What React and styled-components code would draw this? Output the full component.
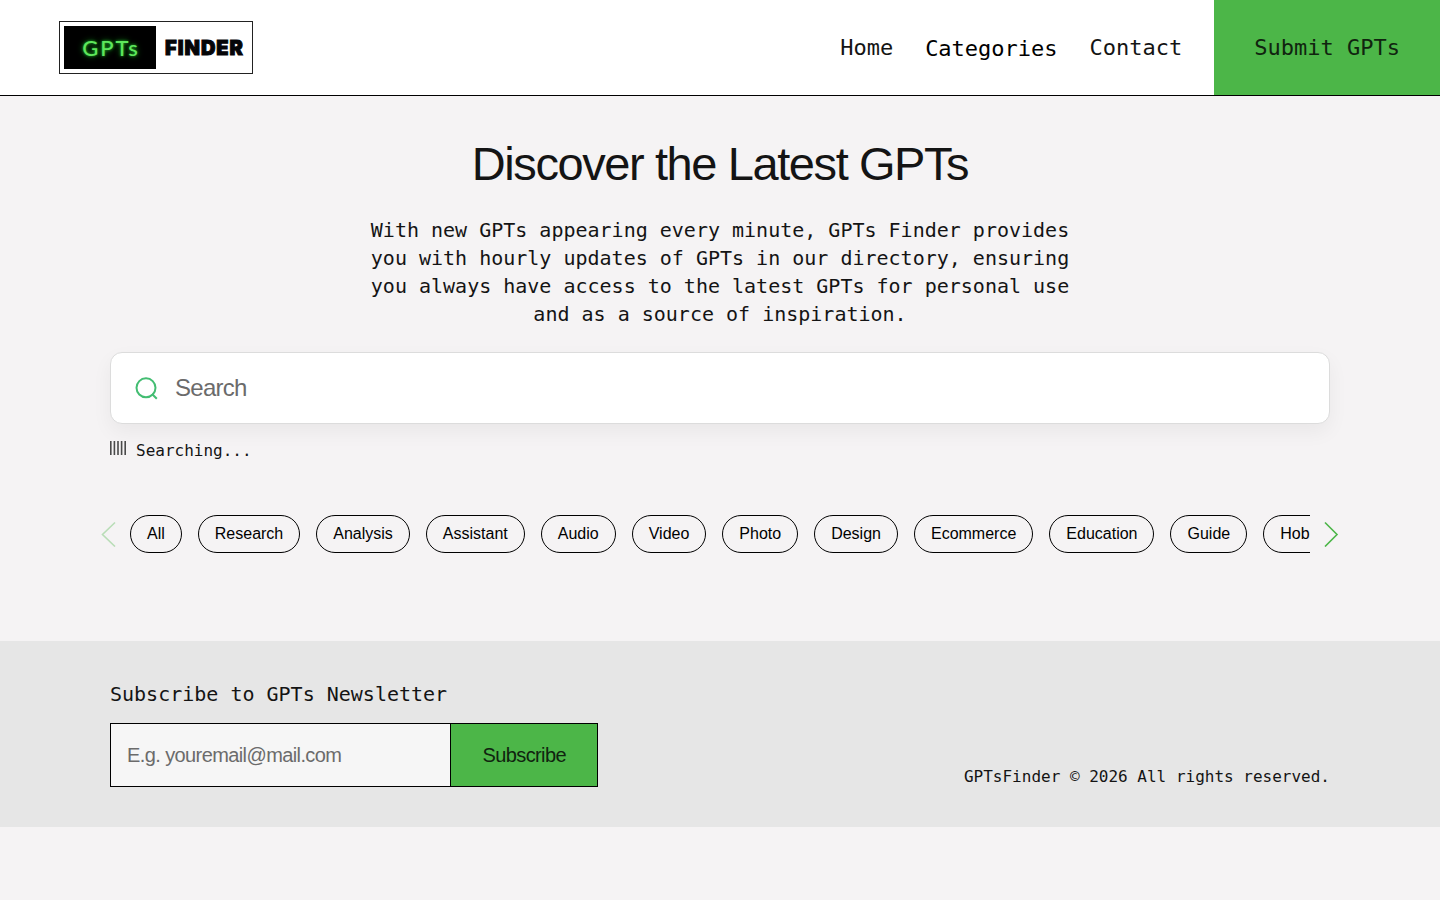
import React from "react";
import styled, { createGlobalStyle } from "styled-components";

const MONO = '"DejaVu Sans Mono", monospace';
const SANS = '"Liberation Sans", Arial, sans-serif';
const GREEN = "#4cb648";
const INK = "#141414";

const GlobalStyle = createGlobalStyle`
  *, *::before, *::after { box-sizing: border-box; }
  body {
    margin: 0;
    background: #f5f3f4;
    color: ${INK};
    font: 16px/20px ${MONO};
  }
  button, input { font: inherit; color: inherit; }
  button { cursor: pointer; }
`;

const Container = styled.div`
  max-width: 1260px;
  margin: 0 auto;
  padding: 0 20px;
`;

const Header = styled.header`
  display: flex;
  align-items: stretch;
  justify-content: space-between;
  height: 96px;
  padding-left: 59px;
  background: #fff;
  border-bottom: 1px solid #000;
`;

const Logo = styled.a`
  display: flex;
  align-items: center;
  align-self: center;
  height: 53px;
  padding: 4px 8px 4px 4px;
  border: 1px solid #222;
  background: #fff;
  text-decoration: none;
`;

const LogoNeon = styled.span`
  display: flex;
  align-items: center;
  justify-content: center;
  width: 92px;
  height: 43px;
  padding-left: 2px;
  background: #000;
  color: #5ee65c;
  font: 500 22px/24px Lato, ${SANS};
  letter-spacing: 2px;
  text-shadow: 0 0 3px #1fae28, 0 0 6px #137a1a;
`;

const LogoWord = styled.span`
  margin-left: 9px;
  color: #050508;
  font: 900 20px/24px Inter, ${SANS};
  letter-spacing: 1px;
  -webkit-text-stroke: 1px #050508;
`;

const Nav = styled.nav`
  display: flex;
  align-items: center;
  gap: 32px;
  font-size: 22px;
  line-height: 28px;
`;

const NavLink = styled.a`
  color: ${INK};
  text-decoration: none;
`;

const NavButton = styled.button`
  padding: 2px 0 0;
  border: 0;
  background: none;
  color: #000;
`;

const SubmitLink = styled.a`
  display: flex;
  align-items: center;
  align-self: stretch;
  padding: 0 40px;
  background: ${GREEN};
  color: #10240f;
  text-decoration: none;
`;

const Hero = styled.section`
  padding-top: 39px;
  text-align: center;
`;

const Title = styled.h1`
  margin: 0 0 24px;
  font: 400 47px/57px ${SANS};
  letter-spacing: -0.03em;
`;

const Intro = styled.p`
  max-width: 720px;
  margin: 0 auto 24px;
  font-size: 20px;
  line-height: 28px;
`;

const SearchBox = styled.label`
  display: flex;
  align-items: center;
  gap: 16px;
  height: 72px;
  padding: 0 24px;
  background: #fff;
  border: 1px solid #dcdcdc;
  border-radius: 12px;
  box-shadow: 0 8px 20px rgba(0, 0, 0, 0.05);
`;

const SearchInput = styled.input`
  flex: 1;
  min-width: 0;
  padding: 0;
  border: 0;
  outline: 0;
  background: none;
  font: 24px/32px ${SANS};
  letter-spacing: -0.03em;
  &::placeholder { color: #6b6b6b; opacity: 1; }
`;

const Status = styled.p`
  display: flex;
  gap: 10px;
  margin: 17px 0 54px;
`;

const Carousel = styled.div`
  display: flex;
  align-items: center;
  gap: 14px;
  margin: 0 -10px;
`;

const ArrowButton = styled.button`
  display: flex;
  flex: none;
  width: 16px;
  padding: 0;
  border: 0;
  background: none;
  color: ${GREEN};
  &:disabled { opacity: 0.35; cursor: default; }
`;

const ChipTrack = styled.div`
  display: flex;
  flex: 1;
  gap: 16px;
  min-width: 0;
  overflow: hidden;
`;

const Chip = styled.button`
  flex: none;
  height: 38px;
  padding: 0 16px;
  border: 1px solid #000;
  border-radius: 19px;
  background: transparent;
  color: #000;
  font: 16px/20px ${SANS};
`;

const Footer = styled.footer`
  margin-top: 88px;
  padding: 39px 0 40px;
  background: #e6e6e6;
`;

const FooterRow = styled(Container)`
  display: flex;
  flex-wrap: wrap;
  align-items: flex-end;
  justify-content: space-between;
  gap: 24px;
`;

const Newsletter = styled.form`
  flex: 0 1 488px;
`;

const NewsletterLabel = styled.label`
  display: block;
  margin-bottom: 15px;
  font-size: 20px;
  line-height: 28px;
`;

const Field = styled.div`
  display: flex;
  height: 64px;
  border: 1px solid #000;
  font: 20px/24px ${SANS};
  letter-spacing: -0.03em;
`;

const EmailInput = styled.input`
  flex: 1;
  min-width: 0;
  padding: 0 16px;
  border: 0;
  border-radius: 0;
  outline: 0;
  background: #f6f6f6;
  letter-spacing: inherit;
  &::placeholder { color: #6b6b6b; opacity: 1; }
`;

const SubscribeButton = styled.button`
  padding: 0 31px;
  border: 0;
  border-left: 1px solid #000;
  background: ${GREEN};
  color: #10240f;
  letter-spacing: inherit;
`;

const Copyright = styled.p`
  margin: 0;
`;

const categories = [
  "All", "Research", "Analysis", "Assistant", "Audio", "Video", "Photo",
  "Design", "Ecommerce", "Education", "Guide", "Hobbies",
];

function SearchIcon() {
  return (
    <svg width="24" height="24" viewBox="0 0 24 24" fill="none" stroke="#43bd72" strokeWidth="2" aria-hidden="true">
      <circle cx="11" cy="11.8" r="9.5" />
      <path d="M17 18 21.8 22.8" />
    </svg>
  );
}

function BarsIcon() {
  return (
    <svg width="16" height="14" viewBox="0 0 16 14" fill="#4a4a4a" aria-hidden="true">
      {[0, 3.6, 7.2, 10.8, 14.4].map((x) => (
        <rect key={x} x={x} width="1.6" height="14" />
      ))}
    </svg>
  );
}

function Chevron({ d }) {
  return (
    <svg width="16" height="26" viewBox="0 0 16 26" fill="none" stroke="currentColor" strokeWidth="1.6" aria-hidden="true">
      <path d={d} />
    </svg>
  );
}

export default function App() {
  return (
    <>
      <GlobalStyle />
      <Header>
        <Logo href="#home">
          <LogoNeon>GPTs</LogoNeon>
          <LogoWord>FINDER</LogoWord>
        </Logo>
        <Nav>
          <NavLink href="#home">Home</NavLink>
          <NavButton type="button">Categories</NavButton>
          <NavLink href="#contact">Contact</NavLink>
          <SubmitLink href="#submit">Submit GPTs</SubmitLink>
        </Nav>
      </Header>
      <Container as="main">
        <Hero>
          <Title>Discover the Latest GPTs</Title>
          <Intro>
            With new GPTs appearing every minute, GPTs Finder provides you with
            hourly updates of GPTs in our directory, ensuring you always have
            access to the latest GPTs for personal use and as a source of
            inspiration.
          </Intro>
        </Hero>
        <SearchBox>
          <SearchIcon />
          <SearchInput type="search" placeholder="Search" aria-label="Search" />
        </SearchBox>
        <Status role="status">
          <BarsIcon />
          Searching...
        </Status>
        <Carousel>
          <ArrowButton type="button" disabled aria-label="Previous categories">
            <Chevron d="M15 1.5 2.5 13.5 15 25.5" />
          </ArrowButton>
          <ChipTrack>
            {categories.map((name) => (
              <Chip key={name} type="button">{name}</Chip>
            ))}
          </ChipTrack>
          <ArrowButton type="button" aria-label="Next categories">
            <Chevron d="M1 1.5 13 13.5 1 25.5" />
          </ArrowButton>
        </Carousel>
      </Container>
      <Footer>
        <FooterRow>
          <Newsletter onSubmit={(e) => e.preventDefault()}>
            <NewsletterLabel htmlFor="email">Subscribe to GPTs Newsletter</NewsletterLabel>
            <Field>
              <EmailInput id="email" type="email" placeholder="E.g. youremail@mail.com" />
              <SubscribeButton type="submit">Subscribe</SubscribeButton>
            </Field>
          </Newsletter>
          <Copyright>GPTsFinder © 2026 All rights reserved.</Copyright>
        </FooterRow>
      </Footer>
    </>
  );
}
